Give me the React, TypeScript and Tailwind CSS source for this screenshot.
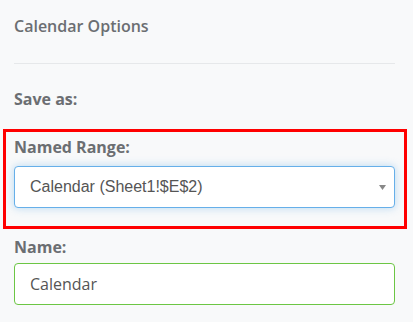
import React from 'react';

const labelCls = "block text-[16px] font-bold leading-5 text-[#6b6e72]";

export default function App() {
  return (
    <div className="w-[413px] h-[322px] overflow-hidden bg-[#f8f9fa] px-[14px] pt-[16px] font-['Open_Sans',sans-serif]">
      <h3 className="text-[16px] font-semibold leading-5 text-[#6b6e72]">Calendar Options</h3>
      <hr className="mt-[27px] mr-[4px] border-t border-[#e6e8ea]" />

      <div className="mt-[25px]">
        <span className={labelCls}>Save as:</span>
      </div>

      {/* highlighted field */}
      <div className="-ml-[11px] mt-[20px] w-[404px] border-[3px] border-[#ff0000] pl-[8px] pt-[5px] pb-[18px]">
        <label className={labelCls}>Named Range:</label>
        <div className="relative mt-[9px] w-[381px]">
          <select
            defaultValue="cal"
            className="block h-[42px] w-full appearance-none rounded-[4px] border border-[#66afe9] bg-white pl-[15px] pr-8 font-['Liberation_Sans',Arial,sans-serif] text-[16px] text-[#555555] shadow-[0_0_8px_rgba(102,175,233,0.45)] outline-none"
          >
            <option value="cal">Calendar (Sheet1!$E$2)</option>
          </select>
          <svg className="pointer-events-none absolute right-[9px] top-[19px]" width="7" height="5" viewBox="0 0 7 5">
            <path d="M0 0h7L3.5 5z" fill="#888888" />
          </svg>
        </div>
      </div>

      <div className="mt-[8px]">
        <label className={labelCls}>Name:</label>
        <input
          defaultValue="Calendar"
          className="mt-[6px] block h-[42px] w-[381px] rounded-[4px] border border-[#6cc644] bg-white pl-[15px] text-[16px] text-[#555555] outline-none"
        />
      </div>
    </div>
  );
}
